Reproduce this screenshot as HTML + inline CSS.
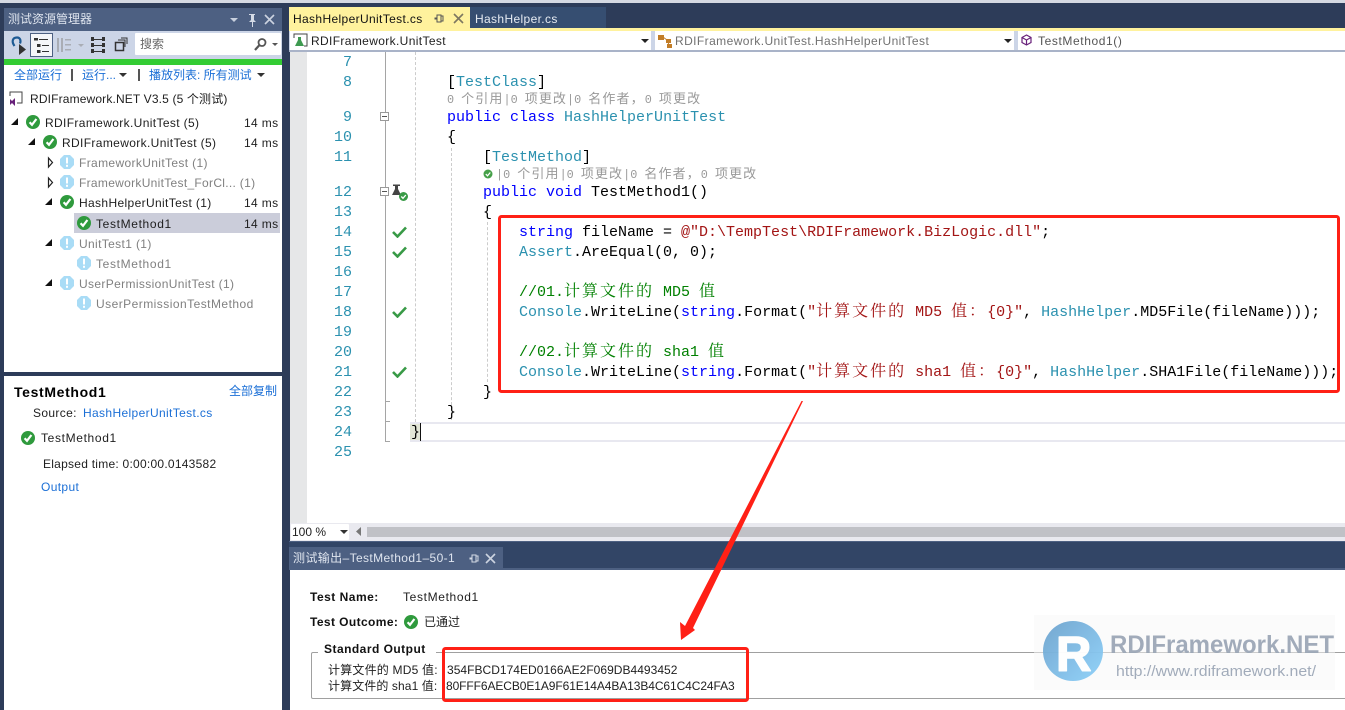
<!DOCTYPE html>
<html lang="zh"><head><meta charset="utf-8"><title>测试资源管理器</title>
<style>
html,body{margin:0;padding:0;width:1345px;height:710px;overflow:hidden;background:#2d3c59}
body{position:relative;font:12px/20px "Liberation Sans","Noto Sans CJK SC",sans-serif;color:#1e1e1e}
.b{position:absolute}
.t{position:absolute;white-space:pre;line-height:20px}
.a{letter-spacing:.36px}.a2{letter-spacing:.65px}
.g{color:#808080}.l{color:#1b6fd6}.bd{font-weight:bold;color:#111}
.k{position:absolute;white-space:pre;font:15px/20px "Liberation Mono","Noto Serif CJK SC",monospace;color:#000}
.n{position:absolute;left:312px;width:40px;text-align:right;font:15px/20px "Liberation Mono",monospace;color:#2b91af}
.k i{font-style:normal;font-family:"Noto Serif CJK SC",serif;font-size:16px;letter-spacing:2px;line-height:0}
.kw{color:#00f}.ty{color:#2b91af}.st{color:#a31515}.cm{color:green}
.z{position:absolute;white-space:pre;font:11.8px/18px "Liberation Mono",monospace;color:#999}
.z i{font-style:normal;font:13px/0 "Noto Sans CJK SC",sans-serif;letter-spacing:1.1px}
svg.i{position:absolute}
</style></head><body>
<svg width="0" height="0" style="position:absolute"><defs>
<symbol id="ok" viewBox="0 0 14 14"><circle cx="7" cy="7" r="7" fill="#2f9a3d"/><path d="M3.6 7.2 6 9.8 10.4 4" fill="none" stroke="#fff" stroke-width="2.2"/></symbol>
<symbol id="nf" viewBox="0 0 14 14"><path d="M4 0h6l4 4v6l-4 4H4L0 10V4z" fill="#a9dcf6"/><rect x="6" y="2.5" width="2" height="6" fill="#fff"/><rect x="6" y="9.8" width="2" height="2" fill="#fff"/></symbol>
<symbol id="ck" viewBox="0 0 15 12"><path d="M1 6 5.5 10.5 14 1.5" fill="none" stroke="#389a46" stroke-width="2.6"/></symbol>
</defs></svg>

<!-- top chrome -->
<div class="b" style="left:0;top:0;width:1345px;height:3px;background:#d5d9e2"></div>

<!-- left panel -->
<div class="b" style="left:4px;top:8px;width:278px;height:23px;background:#4d6082"></div>
<div class="t" style="left:8px;top:9px;color:#dfe5ef">测试资源管理器</div>
<svg class="i" style="left:228px;top:12px" width="50" height="16"><path d="M2 6h8L6 10z" fill="#c8d0de"/><path d="M21 2h6v1h-1v5l2 2h-3v5h-1v-5h-3l2-2V3h-2z" fill="#d5dbe6"/><path d="M37 3l9 9M46 3l-9 9" stroke="#ccd3e0" stroke-width="1.6"/></svg>
<div class="b" style="left:4px;top:31px;width:278px;height:28px;background:#ccd5e7"></div>
<div class="b" style="left:30px;top:33px;width:21px;height:22px;background:#f5f6f9;border:1px solid #4d6082"></div>
<svg class="i" style="left:10px;top:32px" width="125" height="26">
<path d="M4.500 14C1 9 3 5.500 7 5.500c3.500 0 4 3.500 3 6" fill="none" stroke="#1d5a94" stroke-width="2.200"/><path d="M9 12l7 5.500-7 5.500z" fill="#333"/>
<g fill="#333"><rect x="24" y="6" width="4" height="2.500"/><rect x="29" y="7" width="9" height="1"/><rect x="27" y="12" width="3.500" height="3"/><rect x="32" y="13" width="7" height="1"/><rect x="27" y="18" width="3.500" height="3"/><rect x="32" y="19" width="7" height="1"/></g>
<g fill="#a9adb5"><rect x="47" y="6" width="2" height="14"/><rect x="51" y="6" width="2" height="14"/><rect x="55" y="7" width="6" height="1.5"/><rect x="55" y="12" width="6" height="1.5"/><rect x="55" y="17" width="6" height="1.5"/><path d="M68 12h6l-3 3z"/></g>
<g fill="#333"><rect x="81" y="7" width="13" height="1"/><rect x="81" y="13" width="13" height="1"/><rect x="81" y="19" width="13" height="1"/><rect x="81" y="5" width="3" height="4"/><rect x="92" y="5" width="3" height="4"/><rect x="81" y="11" width="3" height="4"/><rect x="92" y="11" width="3" height="4"/><rect x="81" y="17" width="3" height="4"/><rect x="92" y="17" width="3" height="4"/></g>
<g fill="none" stroke="#333"><rect x="105.500" y="10.500" width="8" height="8" stroke-width="1.500"/><path d="M108 8h7v7M111 6h6v6"/></g>
</svg>
<div class="b" style="left:135px;top:33px;width:146px;height:22px;background:#fff;border-radius:1px"></div>
<div class="t" style="left:140px;top:34px;color:#666">搜索</div>
<svg class="i" style="left:253px;top:37px" width="28" height="15"><circle cx="9" cy="5.500" r="3.500" fill="none" stroke="#555" stroke-width="1.800"/><path d="M6.500 8 2 13" stroke="#555" stroke-width="2.200"/><path d="M19 6h6l-3 3z" fill="#555"/></svg>
<div class="b" style="left:4px;top:59px;width:278px;height:6px;background:#33cc33"></div>
<div class="b" style="left:4px;top:65px;width:278px;height:307px;background:#fff"></div>
<div class="b" style="left:4px;top:372px;width:278px;height:4px;background:#2d3c59"></div>
<div class="b" style="left:4px;top:376px;width:278px;height:334px;background:#fff"></div>
<div class="t l" style="left:14px;top:65px">全部运行</div>
<div class="b" style="left:71px;top:69px;width:2px;height:12px;background:#555"></div>
<div class="t l" style="left:82px;top:65px">运行...</div>
<svg class="i" style="left:119px;top:73px" width="9" height="5"><path d="M0 0h8L4 4z" fill="#333"/></svg>
<div class="b" style="left:138px;top:69px;width:2px;height:12px;background:#555"></div>
<div class="t l" style="left:149px;top:65px">播放列表: 所有测试</div>
<svg class="i" style="left:257px;top:73px" width="9" height="5"><path d="M0 0h8L4 4z" fill="#333"/></svg>
<svg class="i" style="left:9px;top:91px" width="15" height="15"><path d="M1 5V1h12v11H8" fill="none" stroke="#444"/><path d="M1 8l2 2 3-3v8l-3-3-2 2z" fill="#68217a"/></svg>
<div class="t" style="left:30px;top:89px;letter-spacing:.15px">RDIFramework.NET V3.5 (5 个测试)</div>

<div class="b" style="left:74px;top:213px;width:206px;height:20px;background:#cbcdda"></div>
<svg class="i" style="left:0;top:110px" width="100" height="205">
<g fill="#111"><path d="M18 8v7h-7z"/><path d="M35 28v7h-7z"/><path d="M52 88v7h-7z"/><path d="M52 129v7h-7z"/><path d="M52 169v7h-7z"/></g>
<g fill="#fff" stroke="#222" stroke-width="1.200"><path d="M48.500 48v9l4-4.500z"/><path d="M48.500 68v9l4-4.500z"/></g>
<use href="#ok" x="26" y="5" width="14" height="14"/><use href="#ok" x="43" y="25" width="14" height="14"/>
<use href="#nf" x="60" y="45" width="14" height="14"/><use href="#nf" x="60" y="65" width="14" height="14"/>
<use href="#ok" x="60" y="85" width="14" height="14"/><use href="#ok" x="77" y="106" width="14" height="14"/>
<use href="#nf" x="60" y="126" width="14" height="14"/><use href="#nf" x="77" y="146" width="14" height="14"/>
<use href="#nf" x="60" y="166" width="14" height="14"/><use href="#nf" x="77" y="186" width="14" height="14"/>
</svg>
<div class="t a" style="left:45px;top:113px">RDIFramework.UnitTest (5)</div><div class="t a" style="left:244px;top:113px">14 ms</div>
<div class="t a" style="left:62px;top:133px">RDIFramework.UnitTest (5)</div><div class="t a" style="left:244px;top:133px">14 ms</div>
<div class="t g a" style="left:79px;top:153px">FrameworkUnitTest (1)</div>
<div class="t g a" style="left:79px;top:173px;letter-spacing:.3px">FrameworkUnitTest_ForCl... (1)</div>
<div class="t a" style="left:79px;top:193px">HashHelperUnitTest (1)</div><div class="t a" style="left:244px;top:193px">14 ms</div>
<div class="t a2" style="left:96px;top:214px">TestMethod1</div><div class="t a" style="left:244px;top:214px">14 ms</div>
<div class="t g a" style="left:79px;top:234px">UnitTest1 (1)</div>
<div class="t g a2" style="left:96px;top:254px">TestMethod1</div>
<div class="t g a" style="left:79px;top:274px">UserPermissionUnitTest (1)</div>
<div class="t g" style="left:96px;top:294px;letter-spacing:.46px">UserPermissionTestMethod</div>

<div class="t bd a2" style="left:14px;top:382px;font-size:14px;color:#000">TestMethod1</div>
<div class="t l" style="left:229px;top:381px">全部复制</div>
<div class="t a" style="left:33px;top:403px">Source:</div>
<div class="t l a" style="left:83px;top:403px">HashHelperUnitTest.cs</div>
<svg class="i" style="left:21px;top:431px" width="14" height="14"><use href="#ok" width="14" height="14"/></svg>
<div class="t a2" style="left:41px;top:428px">TestMethod1</div>
<div class="t" style="left:43px;top:454px;letter-spacing:.25px">Elapsed time: 0:00:00.0143582</div>
<div class="t l a" style="left:41px;top:477px">Output</div>

<!-- document tabs -->
<div class="b" style="left:289px;top:7px;width:181px;height:21px;background:#fff29d"></div>
<div class="b" style="left:470px;top:7px;width:136px;height:21px;background:#364e71"></div>
<div class="b" style="left:289px;top:28px;width:1056px;height:3px;background:#fff29d"></div>
<div class="t a" style="left:293px;top:9px;color:#111">HashHelperUnitTest.cs</div>
<div class="t a" style="left:475px;top:9px;color:#e6ebf2">HashHelper.cs</div>
<svg class="i" style="left:433px;top:13px" width="32" height="12"><path d="M2 5h2V2h4v7H4V6H2zM8 3h2v5H8" fill="none" stroke="#555"/><path d="M21 1l9 9M30 1l-9 9" stroke="#7d7860" stroke-width="1.600"/></svg>

<!-- nav bar -->
<div class="b" style="left:289px;top:31px;width:1056px;height:21px;background:#ccd5e7"></div>
<div class="b" style="left:290px;top:31px;width:361px;height:19px;background:#fff"></div>
<div class="b" style="left:655px;top:31px;width:359px;height:19px;background:#fff"></div>
<div class="b" style="left:1018px;top:31px;width:327px;height:19px;background:#fff"></div>
<div class="b" style="left:289px;top:50px;width:1056px;height:2px;background:#a9b3c8"></div>
<div class="t a" style="left:311px;top:31px">RDIFramework.UnitTest</div>
<div class="t" style="left:675px;top:31px;color:#717171;letter-spacing:.42px">RDIFramework.UnitTest.HashHelperUnitTest</div>
<div class="t" style="left:1038px;top:31px;color:#555;letter-spacing:.6px">TestMethod1()</div>
<svg class="i" style="left:293px;top:33px" width="16" height="15"><path d="M1 5V1h13v12h-3" fill="none" stroke="#444"/><path d="M5 4h3v3l3 6H2l3-6z" fill="#3e9a50"/></svg>
<svg class="i" style="left:658px;top:33px" width="16" height="15"><path d="M0 2h6v5H0zM8 6h5v4H8zM9 11h5v4H9z" fill="#c27d27"/><path d="M5 4l4 3M10 9l1 3" stroke="#c27d27"/></svg>
<svg class="i" style="left:1021px;top:34px" width="12" height="13"><path d="M5.500 1l4.500 2.500v5L5.500 11 1 8.500v-5zM1 3.500l4.500 2.500 4.500-2.500M5.500 6v5" fill="none" stroke="#68217a" stroke-width="1.200"/></svg>
<svg class="i" style="left:641px;top:39px" width="380" height="5"><path d="M0 0h8L4 4z" fill="#222"/><path d="M363 0h8l-4 4z" fill="#222"/></svg>

<!-- editor -->
<div class="b" style="left:290px;top:52px;width:1055px;height:471px;background:#fff"></div>
<div class="b" style="left:290px;top:52px;width:17px;height:471px;background:#e6e7e8"></div>
<div class="b" style="left:385px;top:52px;width:1px;height:389px;background:#a5a5a5"></div>
<div class="b" style="left:385px;top:401px;width:5px;height:1px;background:#a5a5a5"></div>
<div class="b" style="left:385px;top:421px;width:5px;height:1px;background:#a5a5a5"></div>
<div class="b" style="left:385px;top:441px;width:5px;height:1px;background:#a5a5a5"></div>
<div class="b" style="left:415px;top:52px;height:370px;border-left:1px dashed #ccc"></div>
<div class="b" style="left:451px;top:148px;height:272px;border-left:1px dashed #ccc"></div>
<div class="b" style="left:487px;top:222px;height:160px;border-left:1px dashed #ccc"></div>
<svg class="i" style="left:380px;top:112px" width="9" height="9"><rect x=".5" y=".5" width="8" height="8" fill="#fff" stroke="#999"/><path d="M2 4.500h5" stroke="#555"/></svg>
<svg class="i" style="left:380px;top:187px" width="9" height="9"><rect x=".5" y=".5" width="8" height="8" fill="#fff" stroke="#999"/><path d="M2 4.500h5" stroke="#555"/></svg>
<svg class="i" style="left:391px;top:184px" width="18" height="18"><path d="M2 .5h7v1.500H2zM4 2h3v3l3 6H1l3-6z" fill="#444"/><circle cx="12.500" cy="12.500" r="4.500" fill="#389a46"/><path d="M10.300 12.500l1.700 1.800 2.800-3.300" fill="none" stroke="#fff" stroke-width="1.300"/></svg>
<svg class="i" style="left:392px;top:226px" width="15" height="12"><use href="#ck" width="15" height="12"/></svg>
<svg class="i" style="left:392px;top:246px" width="15" height="12"><use href="#ck" width="15" height="12"/></svg>
<svg class="i" style="left:392px;top:306px" width="15" height="12"><use href="#ck" width="15" height="12"/></svg>
<svg class="i" style="left:392px;top:366px" width="15" height="12"><use href="#ck" width="15" height="12"/></svg>
<div class="b" style="left:410px;top:422px;width:935px;height:16px;border-top:2px solid #e8e8f0;border-bottom:2px solid #e8e8f0"></div>
<div class="b" style="left:410px;top:424px;width:10px;height:16px;background:#e2e6d6"></div>
<div class="b" style="left:420px;top:423px;width:1px;height:18px;background:#111"></div>

<div class="n" style="top:53px">7</div><div class="n" style="top:73px">8</div><div class="n" style="top:108px">9</div><div class="n" style="top:128px">10</div><div class="n" style="top:148px">11</div><div class="n" style="top:183px">12</div><div class="n" style="top:203px">13</div><div class="n" style="top:223px">14</div><div class="n" style="top:243px">15</div><div class="n" style="top:263px">16</div><div class="n" style="top:283px">17</div><div class="n" style="top:303px">18</div><div class="n" style="top:323px">19</div><div class="n" style="top:343px">20</div><div class="n" style="top:363px">21</div><div class="n" style="top:383px">22</div><div class="n" style="top:403px">23</div><div class="n" style="top:423px">24</div><div class="n" style="top:443px">25</div>

<div class="k" style="left:447px;top:73px">[<span class="ty">TestClass</span>]</div>
<div class="z" style="left:447px;top:91px">0 <i>个引用</i>|0 <i>项更改</i>|0 <i>名作者，</i>0 <i>项更改</i></div>
<div class="k" style="left:447px;top:108px"><span class="kw">public class</span> <span class="ty">HashHelperUnitTest</span></div>
<div class="k" style="left:447px;top:128px">{</div>
<div class="k" style="left:483px;top:148px">[<span class="ty">TestMethod</span>]</div>
<svg class="i" style="left:483px;top:169px" width="10" height="10"><circle cx="5" cy="5" r="4.500" fill="#46a049"/><path d="M2.800 5l1.700 1.800 2.800-3.300" fill="none" stroke="#fff" stroke-width="1.200"/></svg>
<div class="z" style="left:496px;top:166px">|0 <i>个引用</i>|0 <i>项更改</i>|0 <i>名作者，</i>0 <i>项更改</i></div>
<div class="k" style="left:483px;top:183px"><span class="kw">public void</span> TestMethod1()</div>
<div class="k" style="left:483px;top:203px">{</div>
<div class="k" style="left:519px;top:223px"><span class="kw">string</span> fileName = <span class="st">@"D:\TempTest\RDIFramework.BizLogic.dll"</span>;</div>
<div class="k" style="left:519px;top:243px"><span class="ty">Assert</span>.AreEqual(0, 0);</div>
<div class="k cm" style="left:519px;top:283px;color:green">//01.<i>计算文件的</i> MD5 <i>值</i></div>
<div class="k" style="left:519px;top:303px"><span class="ty">Console</span>.WriteLine(<span class="kw">string</span>.Format(<span class="st">"<i>计算文件的</i> MD5 <i>值：</i>{0}"</span>, <span class="ty">HashHelper</span>.MD5File(fileName)));</div>
<div class="k cm" style="left:519px;top:343px;color:green">//02.<i>计算文件的</i> sha1 <i>值</i></div>
<div class="k" style="left:519px;top:363px"><span class="ty">Console</span>.WriteLine(<span class="kw">string</span>.Format(<span class="st">"<i>计算文件的</i> sha1 <i>值：</i>{0}"</span>, <span class="ty">HashHelper</span>.SHA1File(fileName)));</div>
<div class="k" style="left:483px;top:383px">}</div>
<div class="k" style="left:447px;top:403px">}</div>
<div class="k" style="left:411px;top:423px">}</div>

<!-- zoom / scrollbar -->
<div class="b" style="left:290px;top:523px;width:1055px;height:18px;background:#e9e9ef"></div>
<div class="b" style="left:291px;top:524px;width:58px;height:16px;background:#fff;border-radius:1px"></div>
<div class="t" style="left:292px;top:522px">100 %</div>
<svg class="i" style="left:340px;top:530px" width="9" height="5"><path d="M0 0h8L4 4z" fill="#333"/></svg>
<svg class="i" style="left:356px;top:527px" width="6" height="10"><path d="M5 0v9L0 4.500z" fill="#777"/></svg>
<div class="b" style="left:367px;top:527px;width:978px;height:10px;background:#c0c1c6"></div>

<!-- output pane -->
<div class="b" style="left:289px;top:541px;width:1056px;height:1px;background:#4d6082"></div>
<div class="b" style="left:289px;top:542px;width:1056px;height:26px;background:#324566"></div>
<div class="b" style="left:289px;top:547px;width:214px;height:21px;background:#4d6082"></div>
<div class="b" style="left:289px;top:568px;width:1056px;height:2px;background:#4d6082"></div>
<div class="t" style="left:293px;top:548px;color:#dfe5ef;letter-spacing:.38px">测试输出–TestMethod1–50-1</div>
<svg class="i" style="left:468px;top:553px" width="32" height="12"><path d="M2 5h2V2h4v7H4V6H2zM8 3h2v5H8" fill="none" stroke="#d5dbe6"/><path d="M18 1l9 9M27 1l-9 9" stroke="#ccd3e0" stroke-width="1.600"/></svg>
<div class="b" style="left:290px;top:570px;width:1055px;height:140px;background:#fff"></div>
<div class="t bd" style="left:310px;top:587px;letter-spacing:.5px">Test Name:</div>
<div class="t a2" style="left:403px;top:587px">TestMethod1</div>
<div class="t bd" style="left:310px;top:612px;letter-spacing:.4px">Test Outcome:</div>
<svg class="i" style="left:404px;top:615px" width="14" height="14"><use href="#ok" width="14" height="14"/></svg>
<div class="t" style="left:424px;top:612px">已通过</div>
<div class="b" style="left:311px;top:652px;width:1040px;height:45px;border:1px solid #a0a0a0;border-radius:2px"></div>
<div class="b" style="left:318px;top:645px;width:118px;height:12px;background:#fff"></div>
<div class="t bd" style="left:324px;top:639px;letter-spacing:.47px">Standard Output</div>
<div class="t" style="left:328px;top:660px;letter-spacing:.2px">计算文件的 MD5 值:</div>
<div class="t" style="left:447px;top:660px;letter-spacing:.03px">354FBCD174ED0166AE2F069DB4493452</div>
<div class="t" style="left:328px;top:676px;letter-spacing:.1px">计算文件的 sha1 值:</div>
<div class="t" style="left:446px;top:676px;letter-spacing:-.09px">80FFF6AECB0E1A9F61E14A4BA13B4C61C4C24FA3</div>

<!-- watermark -->
<div class="b" style="left:1034px;top:615px;width:301px;height:75px;background:rgba(248,248,248,.5)"></div>
<svg class="i" style="left:1034px;top:615px" width="301" height="75">
<defs><linearGradient id="lg" x1="0" y1="0" x2="1" y2="1"><stop offset="0" stop-color="#6aa0cc"/><stop offset="1" stop-color="#8ad0fa"/></linearGradient></defs>
<g opacity=".92">
<circle cx="39" cy="36" r="30" fill="url(#lg)"/>
<text x="22" y="56" font-family="Liberation Sans" font-weight="bold" font-size="49" fill="#fff" stroke="#fff" stroke-width="1.500" stroke-linejoin="round">R</text>
<text x="76" y="38" font-family="Liberation Sans" font-weight="bold" font-size="25" fill="#9aa5b5" textLength="224" lengthAdjust="spacingAndGlyphs">RDIFramework.NET</text>
<text x="82" y="61" font-family="Liberation Sans" font-size="15" fill="#9aa5b5" textLength="200" lengthAdjust="spacingAndGlyphs">http://www.rdiframework.net/</text>
</g>
</svg>

<!-- annotations -->
<svg class="i" style="left:0;top:0" width="1345" height="710">
<rect x="499.500" y="216.500" width="839" height="175" rx="2" fill="none" stroke="#ff2016" stroke-width="3"/>
<rect x="443.500" y="648.500" width="304" height="52" rx="2" fill="none" stroke="#ff2016" stroke-width="3"/>
<path d="M801.500 401 803 401 693 628 695 630 681 640 680 622 685 626z" fill="#ff2016"/>
</svg>
</body></html>
